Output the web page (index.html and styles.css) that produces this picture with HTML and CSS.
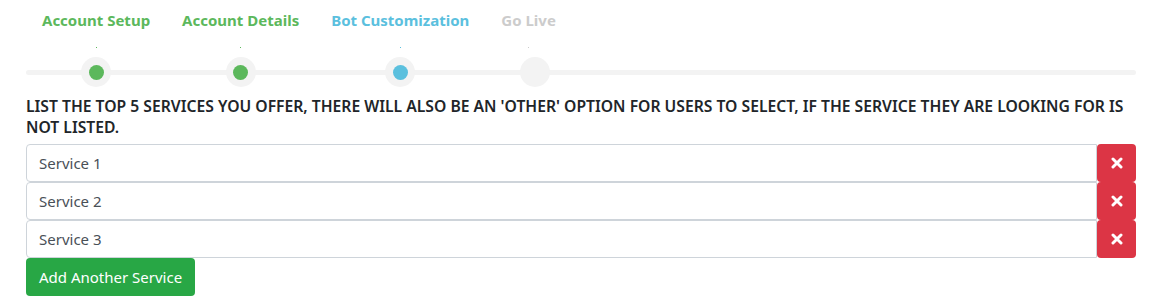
FILE: index.html
```html
<!DOCTYPE html>
<html>

<head>
    <meta name="viewport" content="width=device-width,initial-scale=1.0">
    <title>Bot setup</title>
    <link rel="stylesheet" href="styles.css">
</head>

<body>
    <div class="wizard">
        <ul class="steps">
            <li class="step done"><span class="label">Account Setup</span><span class="tick"></span><span class="node"></span></li>
            <li class="step done"><span class="label">Account Details</span><span class="tick"></span><span class="node"></span></li>
            <li class="step current"><span class="label">Bot Customization</span><span class="tick"></span><span class="node"></span></li>
            <li class="step todo"><span class="label">Go Live</span><span class="tick"></span><span class="node"></span></li>
        </ul>

        <p class="prompt">LIST THE TOP 5 SERVICES YOU OFFER, THERE WILL ALSO BE AN 'OTHER' OPTION FOR USERS TO SELECT, IF THE SERVICE THEY ARE LOOKING FOR IS NOT LISTED.</p>

        <div class="services">
            <div class="service-row">
                <input class="service-input" value="Service 1" />
                <button class="remove-btn"><svg width="12" height="12" viewBox="0 0 12 12"><path d="M2 2 L10 10 M10 2 L2 10" stroke="#fff" stroke-width="3" stroke-linecap="round" /></svg></button>
            </div>
            <div class="service-row">
                <input class="service-input" value="Service 2" />
                <button class="remove-btn"><svg width="12" height="12" viewBox="0 0 12 12"><path d="M2 2 L10 10 M10 2 L2 10" stroke="#fff" stroke-width="3" stroke-linecap="round" /></svg></button>
            </div>
            <div class="service-row">
                <input class="service-input" value="Service 3" />
                <button class="remove-btn"><svg width="12" height="12" viewBox="0 0 12 12"><path d="M2 2 L10 10 M10 2 L2 10" stroke="#fff" stroke-width="3" stroke-linecap="round" /></svg></button>
            </div>
        </div>
        <button class="add-btn">Add Another Service</button>
    </div>
</body>

</html>
```

FILE: styles.css
```css
body {
    margin: 0;
    font-family: "Noto Sans", "Open Sans", sans-serif;
    color: #212529;
    background: #fff;
}

.wizard {
    padding: 0 20px 0 26px;
}

.steps {
    position: relative;
    list-style-type: none;
    margin: 0;
    padding: 9px 0 0 16px;
    display: flex;
    gap: 32px;
}

/* the grey rail behind the nodes */
.steps::before {
    content: "";
    position: absolute;
    left: 0;
    right: 0;
    top: 70px;
    height: 5px;
    border-radius: 3px;
    background: #f3f3f3;
}

.step {
    position: relative;
    display: flex;
    flex-direction: column;
    align-items: center;
}

.label {
    font-size: 15px;
    font-weight: 700;
    line-height: 22px;
    white-space: nowrap;
}

.tick {
    width: 1px;
    height: 1px;
    margin-top: 16px;
}

.node {
    width: 30px;
    height: 30px;
    margin-top: 9px;
    border-radius: 50%;
    background: #f3f3f3;
    display: flex;
    align-items: center;
    justify-content: center;
}

.node::after {
    content: "";
    width: 15px;
    height: 15px;
    border-radius: 50%;
}

.done .label {
    color: #5cb85c;
}

.done .tick,
.done .node::after {
    background: #5cb85c;
}

.current .label {
    color: #5bc0de;
}

.current .tick,
.current .node::after {
    background: #5bc0de;
}

.todo .label {
    color: #ccc;
}

.todo .tick {
    background: #ccc;
}

.todo .node {
    position: relative;
    left: 6px;
}

.prompt {
    margin: 9px 0 6px;
    font-size: 15.7px;
    font-weight: 600;
    line-height: 21px;
}

.service-row {
    display: flex;
    height: 38px;
}

.service-input {
    flex-grow: 1;
    border: 1px solid #ced4da;
    border-radius: 4px 0 0 4px;
    padding: 0 12px;
    font-family: inherit;
    font-size: 15px;
    color: #495057;
    outline: none;
}

.remove-btn {
    width: 39px;
    border: none;
    border-radius: 4px;
    background: #dc3545;
    display: flex;
    align-items: center;
    justify-content: center;
    padding: 0;
    cursor: pointer;
}

.add-btn {
    height: 38px;
    padding: 0 13px;
    border: none;
    border-radius: 4px;
    background: #28a745;
    color: #fff;
    font-family: inherit;
    font-size: 15px;
    cursor: pointer;
}
```
